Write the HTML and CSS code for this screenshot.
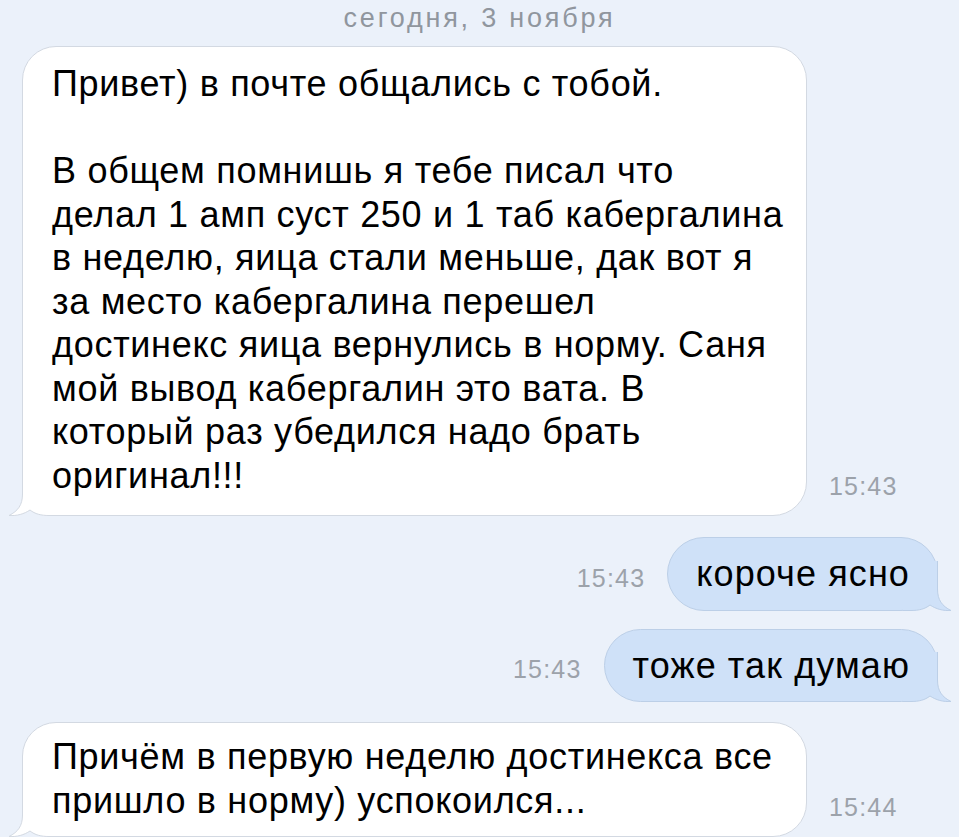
FILE: index.html
```html
<!DOCTYPE html>
<html lang="ru">
<head>
    <meta charset="UTF-8">
    <meta name="viewport" content="width=device-width, initial-scale=1.0">
    <title>Сообщения</title>
    <link rel="stylesheet" href="styles.css">
</head>
<body>
    <div class="chat">
        <div class="date">сегодня, 3 ноября</div>

        <div class="row in first">
            <div class="bubble">
                <span class="text">Привет) в почте общались с тобой.<br>
                <br>
                В общем помнишь я тебе писал что<br>
                делал 1 амп суст 250 и 1 таб кабергалина<br>
                в неделю, яица стали меньше, дак вот я<br>
                за место кабергалина перешел<br>
                достинекс яица вернулись в норму. Саня<br>
                мой вывод кабергалин это вата. В<br>
                который раз убедился надо брать<br>
                оригинал!!!</span>
                <svg class="tail" width="50" height="50" viewBox="0 0 50 50">
                    <path class="tail-fill" d="M15.5 0 L15.5 28 C15.5 39 11 45 2 49.5 C10 50 17 48 23 44 C28 48 34 49.5 42 49.5 L50 49.5 L50 0 Z"/>
                    <path class="tail-line" d="M15.5 0 L15.5 28 C15.5 39 11 45 2 49.5 C10 50 17 48 23 44 C28 48 34 49.5 42 49.5 L50 49.5"/>
                </svg>
            </div>
            <span class="time">15:43</span>
        </div>

        <div class="row out">
            <span class="time">15:43</span>
            <div class="bubble">
                <span class="text">короче ясно</span>
                <svg class="tail" width="50" height="50" viewBox="0 0 50 50">
                    <path class="tail-fill" d="M34.5 0 L34.5 28 C34.5 39 39 45 48 49.5 C40 50 33 48 27 44 C22 48 16 49.5 8 49.5 L0 49.5 L0 0 Z"/>
                    <path class="tail-line" d="M34.5 0 L34.5 28 C34.5 39 39 45 48 49.5 C40 50 33 48 27 44 C22 48 16 49.5 8 49.5 L0 49.5"/>
                </svg>
            </div>
        </div>

        <div class="row out second">
            <span class="time">15:43</span>
            <div class="bubble">
                <span class="text">тоже так думаю</span>
                <svg class="tail" width="50" height="50" viewBox="0 0 50 50">
                    <path class="tail-fill" d="M34.5 0 L34.5 28 C34.5 39 39 45 48 49.5 C40 50 33 48 27 44 C22 48 16 49.5 8 49.5 L0 49.5 L0 0 Z"/>
                    <path class="tail-line" d="M34.5 0 L34.5 28 C34.5 39 39 45 48 49.5 C40 50 33 48 27 44 C22 48 16 49.5 8 49.5 L0 49.5"/>
                </svg>
            </div>
        </div>

        <div class="row in last">
            <div class="bubble">
                <span class="text">Причём в первую неделю достинекса все<br>
                пришло в норму) успокоился...</span>
                <svg class="tail" width="50" height="50" viewBox="0 0 50 50">
                    <path class="tail-fill" d="M15.5 0 L15.5 28 C15.5 39 11 45 2 49.5 C10 50 17 48 23 44 C28 48 34 49.5 42 49.5 L50 49.5 L50 0 Z"/>
                    <path class="tail-line" d="M15.5 0 L15.5 28 C15.5 39 11 45 2 49.5 C10 50 17 48 23 44 C28 48 34 49.5 42 49.5 L50 49.5"/>
                </svg>
            </div>
            <span class="time">15:44</span>
        </div>
    </div>
</body>
</html>
```

FILE: styles.css
```css
body {
    font-family: 'Liberation Sans', Arial, sans-serif;
    margin: 0;
    padding: 0;
    height: 100vh;
    overflow: hidden;
    background-color: #ebf1fa;
}

.chat {
    display: flex;
    flex-direction: column;
}

.date {
    text-align: center;
    font-size: 27px;
    letter-spacing: 2.8px;
    line-height: 30px;
    color: #90969e;
    margin-top: 3px;
    height: 43px;
}

.row {
    display: flex;
    align-items: flex-end;
}

.row.in {
    padding-left: 22px;
    margin-top: 20px;
}

.row.in.first {
    margin-top: 0;
}

.row.out {
    justify-content: flex-end;
    padding-right: 21px;
    margin-top: 21px;
}

.row.out.second {
    margin-top: 18px;
}

.bubble {
    position: relative;
    font-size: 36px;
    letter-spacing: 0.7px;
    line-height: 43.5px;
    color: #000;
    border-radius: 34px;
}

.text {
    position: relative;
    z-index: 1;
    white-space: nowrap;
}

.row.in .bubble {
    width: 726px;
    padding: 15px 28px 18px 29px;
    background-color: #ffffff;
    border: 1px solid #d3d9e2;
}

.row.in.last .bubble {
    padding-top: 12px;
    padding-bottom: 14px;
}

.row.out .bubble {
    padding: 14px 27px 14px 28px;
    letter-spacing: 1.1px;
    background-color: #cfe1f8;
    border: 1px solid #bccfe7;
    border-radius: 37px;
}

.tail {
    position: absolute;
    bottom: -1px;
    z-index: 0;
}

.row.in .tail {
    left: -16px;
}

.row.out .tail {
    right: -16px;
}

.row.in .tail-fill {
    fill: #ffffff;
}

.row.out .tail-fill {
    fill: #cfe1f8;
}

.tail-line {
    fill: none;
    stroke: #d3d9e2;
    stroke-width: 1;
}

.row.out .tail-line {
    stroke: #bccfe7;
}

.time {
    font-size: 25px;
    letter-spacing: 1.2px;
    line-height: 29px;
    color: #9ca2aa;
}

.row.in .time {
    margin-left: 22px;
    margin-bottom: 15px;
}

.row.out .time {
    margin-right: 22px;
    margin-bottom: 18px;
}
```
